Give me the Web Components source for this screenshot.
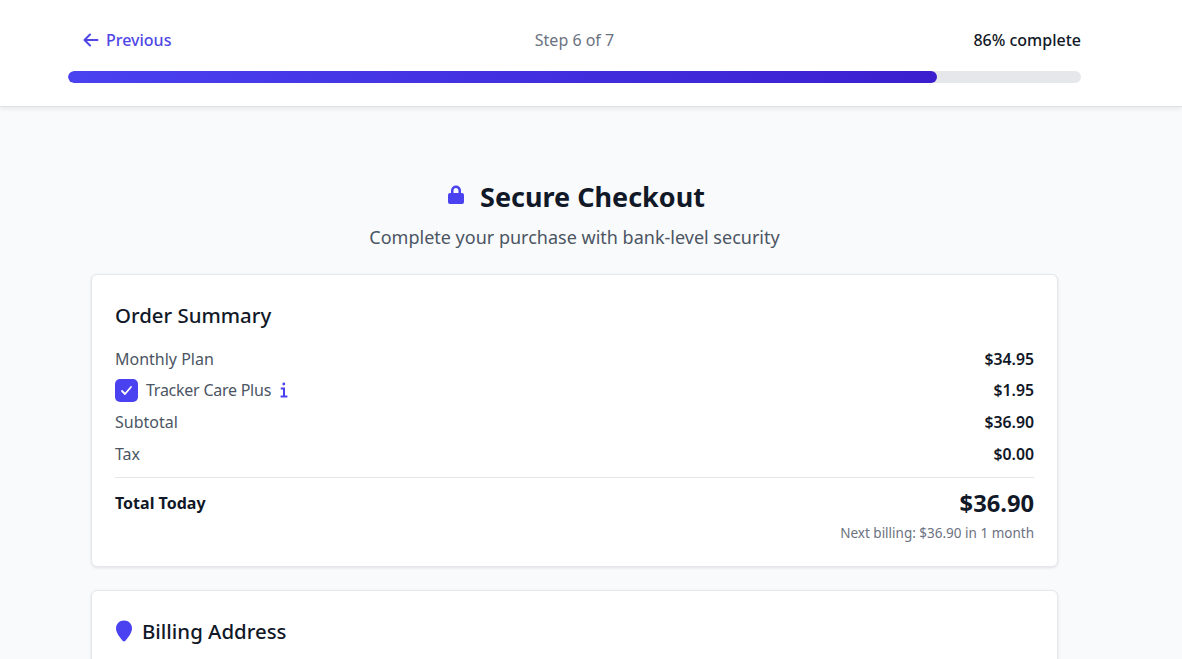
<!DOCTYPE html>
<html lang="en">
<head>
<meta charset="utf-8">
<title>Secure Checkout</title>
<style>
  html, body { margin: 0; height: 659px; overflow: hidden; background: #f9fafb; }
  body { font-family: "Noto Sans", "Open Sans", sans-serif; color: #111827; }
</style>
</head>
<body>
<checkout-progress step="Step 6 of 7" percent="86"></checkout-progress>
<checkout-main>
  <checkout-title slot="title" subtitle="Complete your purchase with bank-level security">Secure Checkout</checkout-title>
  <order-summary></order-summary>
  <billing-card></billing-card>
</checkout-main>

<script>
(() => {
  const ACCENT = "#4a41f0";

  class CheckoutProgress extends HTMLElement {
    constructor() {
      super();
      this._root = this.attachShadow({ mode: "open" });
    }
    connectedCallback() {
      const percent = this.getAttribute("percent") || "0";
      const step = this.getAttribute("step") || "";
      this._root.innerHTML = `
        <style>
          :host { display: block; height: 107px; box-sizing: border-box; background: #fff; border-bottom: 1px solid #e0e2e6; box-shadow: 0 2px 4px rgba(0,0,0,.07); padding: 0 101px 0 68px; }
          .row { display: grid; grid-template-columns: 1fr auto 1fr; align-items: center; height: 71px; box-sizing: border-box; padding-top: 9px; }
          .prev { display: flex; align-items: center; gap: 7px; padding-left: 15px; color: #4f46e5; font-size: 16px; font-weight: 500; }
          .step { color: #6b7280; font-size: 16px; }
          .pct { text-align: right; font-size: 16px; font-weight: 500; color: #111827; }
          .track { height: 12px; border-radius: 6px; background: #e5e7eb; overflow: hidden; }
          .fill { height: 100%; width: ${percent === "86" ? "85.8%" : percent + "%"}; border-radius: 6px; background: linear-gradient(90deg, ${ACCENT}, #3b1fcf); }
          svg { width: 16px; height: 16px; display: block; }
        </style>
        <div class="row">
          <div class="prev">
            <svg viewBox="0 0 16 16" fill="none" stroke="currentColor" stroke-width="2" stroke-linecap="round" stroke-linejoin="round"><path d="M14.5 8H1.500M7 2.500 1.500 8 7 13.500"/></svg>
            <span>Previous</span>
          </div>
          <div class="step">${step}</div>
          <div class="pct">${percent}% complete</div>
        </div>
        <div class="track"><div class="fill"></div></div>
      `;
    }
  }

  class CheckoutMain extends HTMLElement {
    constructor() {
      super();
      this.attachShadow({ mode: "open" }).innerHTML = `
        <style>
          :host { display: block; padding: 67px 124px 0 91px; }
          .stack { display: flex; flex-direction: column; gap: 23px; }
        </style>
        <slot name="title"></slot>
        <div class="stack"><slot></slot></div>
      `;
    }
  }

  class CheckoutTitle extends HTMLElement {
    constructor() {
      super();
      this._root = this.attachShadow({ mode: "open" });
    }
    connectedCallback() {
      this._root.innerHTML = `
        <style>
          :host { display: block; text-align: center; margin-bottom: 20px; }
          h1 { margin: 0; padding-left: 3px; display: flex; align-items: center; justify-content: center; gap: 15px; font-size: 27px; line-height: 46px; font-weight: 700; color: #111827; }
          p { margin: 0; font-size: 18px; line-height: 34px; color: #4b5563; }
          svg { width: 18px; height: 20px; display: block; margin-top: -5px; }
        </style>
        <h1>
          <svg viewBox="0 0 18 20"><path fill="${ACCENT}" d="M4 8V5.500a5 5 0 0 1 10 0V8h1a2 2 0 0 1 2 2v7a2 2 0 0 1-2 2H3a2 2 0 0 1-2-2v-7a2 2 0 0 1 2-2h1Zm2.500 0h5V5.500a2.500 2.500 0 0 0-5 0V8Z"/></svg>
          <span><slot></slot></span>
        </h1>
        <p>${this.getAttribute("subtitle")}</p>
      `;
    }
  }

  const cardCss = `
    :host { display: block; box-sizing: border-box; background: #fff; border: 1px solid #e5e7eb; border-radius: 6px; box-shadow: 0 1px 3px rgba(0,0,0,.1); padding: 23px; }
    h2 { margin: 1px 0 0; font-size: 20.4px; font-weight: 500; line-height: 32px; color: #111827; }
  `;

  class OrderSummary extends HTMLElement {
    constructor() {
      super();
      this.attachShadow({ mode: "open" }).innerHTML = `
        <style>
          ${cardCss}
          :host { height: 293px; }
          .lines { margin-top: 13px; }
          .line { display: flex; justify-content: space-between; align-items: center; height: 32px; font-size: 16px; color: #4b5563; }
          .line:first-child { height: 30px; }
          .line b { font-weight: 600; color: #111827; font-size: 15.8px; }
          .label { display: flex; align-items: center; }
          .name { letter-spacing: -.25px; }
          .check { width: 23px; height: 23px; border-radius: 5px; background: ${ACCENT}; display: flex; align-items: center; justify-content: center; margin-right: 8px; }
          .check svg { width: 13px; height: 13px; display: block; }
          .info { width: 8px; height: 16px; margin-left: 9px; display: block; }
          hr { border: 0; border-top: 1px solid #e5e7eb; margin: 7px 0 0; }
          .total { display: flex; justify-content: space-between; margin-top: 8px; }
          .total strong { font-size: 16px; font-weight: 700; line-height: 34px; }
          .amount { font-size: 23.7px; font-weight: 700; line-height: 34px; text-align: right; color: #111827; }
          .next { font-size: 13.5px; line-height: 24px; color: #6b7280; text-align: right; margin-top: 1px; }
        </style>
        <h2>Order Summary</h2>
        <div class="lines">
          <div class="line"><span>Monthly Plan</span><b>$34.95</b></div>
          <div class="line">
            <span class="label">
              <span class="check"><svg viewBox="0 0 13 13" fill="none" stroke="#fff" stroke-width="1.8" stroke-linecap="round" stroke-linejoin="round"><path d="M2 7l3 3 6-7"/></svg></span>
              <span class="name">Tracker Care Plus</span>
              <svg class="info" viewBox="0 0 8 16"><circle cx="3.800" cy="2" r="1.400" fill="${ACCENT}"/><path fill="none" stroke="${ACCENT}" stroke-width="2" d="M.8 6.400h3.200V14.600M.6 14.600h6.800"/></svg>
            </span>
            <b>$1.95</b>
          </div>
          <div class="line"><span>Subtotal</span><b>$36.90</b></div>
          <div class="line"><span>Tax</span><b>$0.00</b></div>
        </div>
        <hr>
        <div class="total">
          <strong>Total Today</strong>
          <div>
            <div class="amount">$36.90</div>
            <div class="next">Next billing: $36.90 in 1 month</div>
          </div>
        </div>
      `;
    }
  }

  class BillingCard extends HTMLElement {
    constructor() {
      super();
      this.attachShadow({ mode: "open" }).innerHTML = `
        <style>
          ${cardCss}
          :host { height: 200px; }
          h2 { display: flex; align-items: center; gap: 9px; }
          svg { width: 18px; height: 22px; display: block; }
        </style>
        <h2>
          <svg viewBox="0 0 18 22"><path fill="${ACCENT}" d="M9 .5c4.600 0 8 3.400 8 8 0 4.500-5 10.500-6.800 12.500-.7.600-1.700.600-2.400 0C6 19 1 13 1 8.500c0-4.600 3.400-8 8-8Z"/></svg>
          Billing Address
        </h2>
      `;
    }
  }

  customElements.define("checkout-progress", CheckoutProgress);
  customElements.define("checkout-main", CheckoutMain);
  customElements.define("checkout-title", CheckoutTitle);
  customElements.define("order-summary", OrderSummary);
  customElements.define("billing-card", BillingCard);
})();
</script>
</body>
</html>
